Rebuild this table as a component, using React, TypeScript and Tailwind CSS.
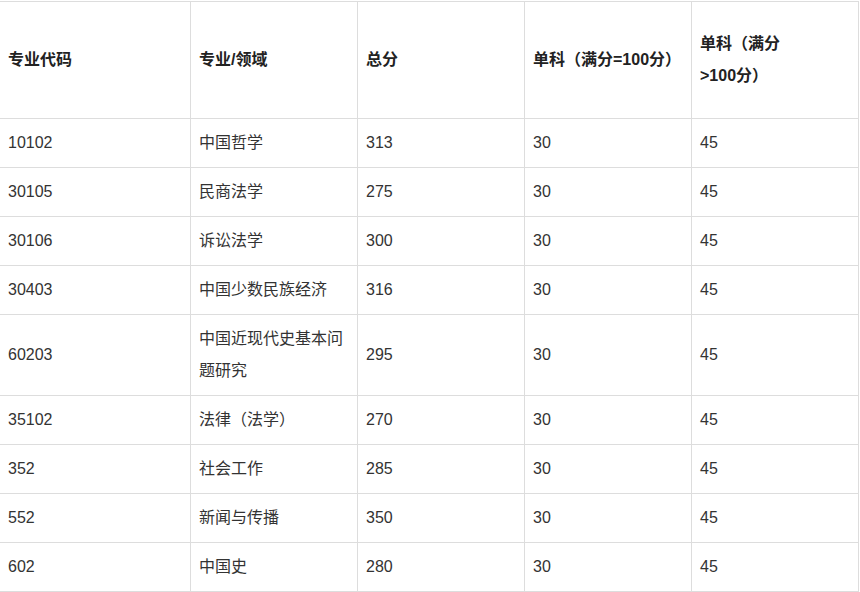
import React from "react";

const rows: { cells: React.ReactNode[]; h: string }[] = [
  { cells: ["10102", "中国哲学", "313", "30", "45"], h: "h-[49px]" },
  { cells: ["30105", "民商法学", "275", "30", "45"], h: "h-[49px]" },
  { cells: ["30106", "诉讼法学", "300", "30", "45"], h: "h-[49px]" },
  { cells: ["30403", "中国少数民族经济", "316", "30", "45"], h: "h-[49px]" },
  {
    cells: [
      "60203",
      <>
        中国近现代史基本问
        <br />
        题研究
      </>,
      "295",
      "30",
      "45",
    ],
    h: "h-[81px]",
  },
  { cells: ["35102", "法律（法学）", "270", "30", "45"], h: "h-[49px]" },
  { cells: ["352", "社会工作", "285", "30", "45"], h: "h-[49px]" },
  { cells: ["552", "新闻与传播", "350", "30", "45"], h: "h-[49px]" },
  { cells: ["602", "中国史", "280", "30", "45"], h: "h-[49px]" },
];

const header: React.ReactNode[] = [
  "专业代码",
  "专业/领域",
  "总分",
  "单科（满分=100分）",
  <>
    单科（满分
    <br />
    &gt;100分）
  </>,
];

const cols = "grid grid-cols-[190px_167px_167px_167px_167px]";

export default function App() {
  return (
    <div
      className="w-[860px] h-[592px] bg-white pt-px overflow-hidden text-[16px] leading-[32px] text-[#333333]"
      style={{ fontFamily: '"Liberation Sans", Arial, "Noto Sans CJK SC", sans-serif' }}
    >
      <div className="w-[859px] border-t border-r border-[#dddddd]">
        <div className={cols}>
          {header.map((c, i) => (
            <div
              key={i}
              className={`h-[117px] flex items-center pl-2 pr-2 border-b border-[#dddddd] font-bold text-[#222222] ${
                i > 0 ? "border-l" : ""
              }`}
            >
              <div>{c}</div>
            </div>
          ))}
        </div>
        {rows.map((r, ri) => (
          <div key={ri} className={cols}>
            {r.cells.map((c, i) => (
              <div
                key={i}
                className={`${r.h} flex items-center pl-2 pr-2 border-b border-[#dddddd] ${
                  i > 0 ? "border-l" : ""
                }`}
              >
                <div>{c}</div>
              </div>
            ))}
          </div>
        ))}
      </div>
    </div>
  );
}
